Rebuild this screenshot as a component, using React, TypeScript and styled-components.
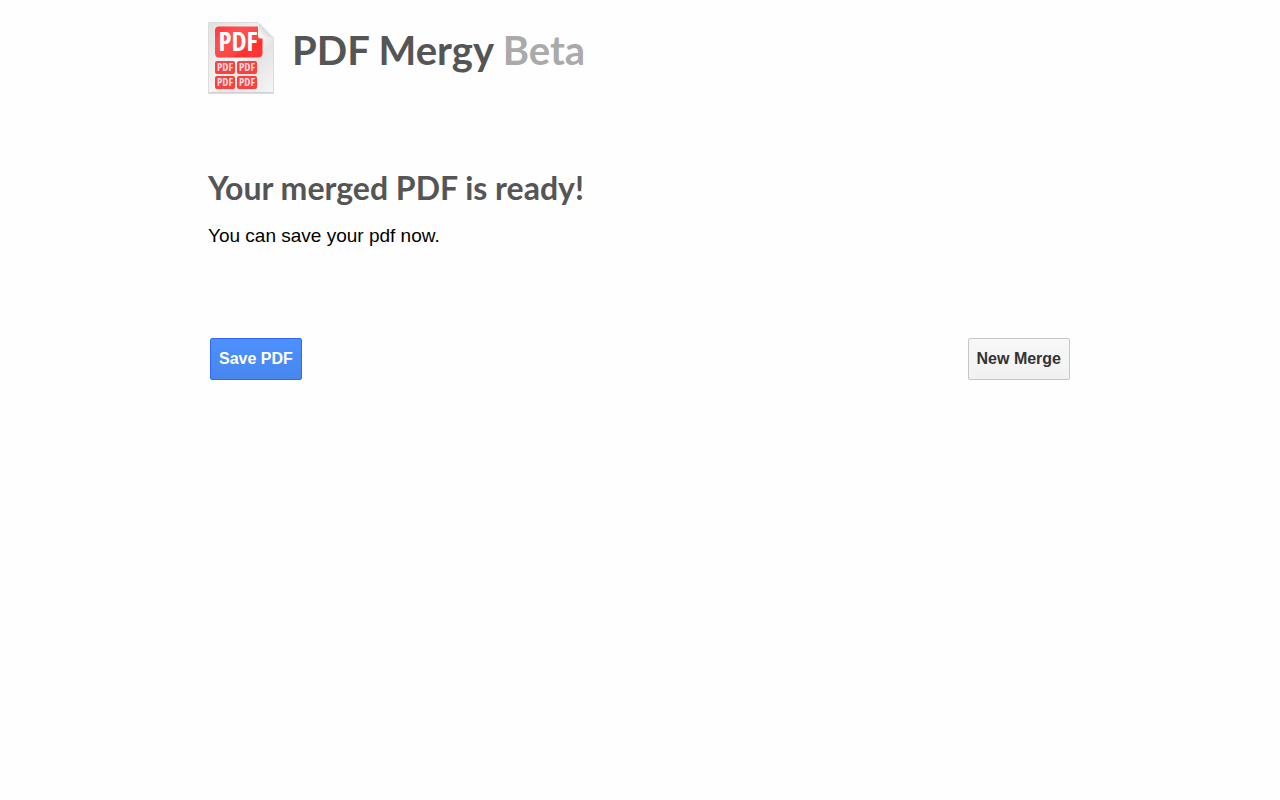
import React from "react";
import styled, { createGlobalStyle } from "styled-components";

const GlobalStyle = createGlobalStyle`
  body {
    margin: 0;
    background: #fefefe;
    color: #000;
    font-family: "Liberation Sans", Arial, sans-serif;
  }
`;

const Page = styled.div`
  box-sizing: border-box;
  max-width: 896px;
  margin: 0 auto;
  padding: 22px 16px;
`;

const Header = styled.header`
  display: flex;
  align-items: flex-start;
  gap: 18px;
  margin-bottom: 70px;
`;

const Logo = styled.svg`
  flex: none;
  width: 66px;
  height: 72px;
`;

const Title = styled.h1`
  margin: 0;
  color: #555;
  font: bold 40px/56px "Comic Sans MS", Lato, sans-serif;
`;

const Beta = styled.span`
  color: #aaa;
`;

const Heading = styled.h2`
  margin: 0 0 12px;
  color: #555;
  font: bold 32px/48px "Comic Sans MS", Lato, sans-serif;
`;

const Message = styled.p`
  margin: 0 0 88px;
  font-size: 19px;
  line-height: 24px;
`;

const Actions = styled.div`
  display: flex;
  justify-content: space-between;
  padding: 2px;
`;

const Button = styled.button<{ $primary?: boolean }>`
  height: 42px;
  padding: 0 8px;
  border: 1px solid ${(p) => (p.$primary ? "#3366ff" : "#c6c6c6")};
  border-radius: 2px;
  background: ${(p) =>
    p.$primary
      ? "linear-gradient(#4d90fe, #4787ed)"
      : "linear-gradient(#f8f8f8, #f1f1f1)"};
  color: ${(p) => (p.$primary ? "#fff" : "#333")};
  font: bold 16px/24px "Liberation Sans", Arial, sans-serif;
  cursor: pointer;
`;

const smallBadges = [
  { x: 7, y: 39 },
  { x: 29, y: 39 },
  { x: 7, y: 54 },
  { x: 29, y: 54 },
];

function PdfLogo() {
  return (
    <Logo viewBox="0 0 66 72" role="img" aria-label="PDF Mergy">
      <defs>
        <linearGradient id="paper" x1="0" y1="0" x2="1" y2="1">
          <stop offset="0" stopColor="#e0e0e0" />
          <stop offset="0.5" stopColor="#f4f4f4" />
          <stop offset="0.64" stopColor="#e4e4e4" />
          <stop offset="1" stopColor="#f6f6f6" />
        </linearGradient>
        <linearGradient id="red" x1="0" y1="0" x2="1" y2="1">
          <stop offset="0" stopColor="#ff3535" />
          <stop offset="0.3" stopColor="#ff5050" />
          <stop offset="0.65" stopColor="#fb4444" />
          <stop offset="0.7" stopColor="#ff3030" />
          <stop offset="1" stopColor="#ff3939" />
        </linearGradient>
        <linearGradient id="fold" x1="0" y1="1" x2="1" y2="0">
          <stop offset="0" stopColor="#fff" />
          <stop offset="0.5" stopColor="#dadada" />
        </linearGradient>
      </defs>
      <path d="M.5.5H50L65.5 16V71.5H.5Z" fill="url(#paper)" stroke="#dcdcdc" />
      <path d="M1 70.5H65" stroke="#d2d2d2" />
      <path
        d="M11 4.500H50V14Q50 16.500 52 16.500H54.500V31Q54.500 35.500 50 35.500H11Q7 35.500 7 31V8.500Q7 4.500 11 4.500Z"
        fill="url(#red)"
      />
      <path d="M51 1L65 15.500H53Q51 15.500 51 13Z" fill="url(#fold)" />
      <text
        x="30"
        y="29"
        textAnchor="middle"
        fill="#fff"
        fontFamily="Open Sans Condensed, sans-serif"
        fontSize="27"
        fontWeight="bold"
      >
        PDF
      </text>
      {smallBadges.map(({ x, y }) => (
        <g key={`${x}-${y}`}>
          <rect x={x} y={y} width="20" height="13" rx="2" fill="#fa4040" />
          <text
            x={x + 10}
            y={y + 10}
            textAnchor="middle"
            fill="#ffdede"
            fontFamily="Open Sans Condensed, sans-serif"
            fontSize="11"
            fontWeight="bold"
          >
            PDF
          </text>
        </g>
      ))}
    </Logo>
  );
}

export default function App() {
  return (
    <>
      <GlobalStyle />
      <Page>
        <Header>
          <PdfLogo />
          <Title>
            PDF Mergy <Beta>Beta</Beta>
          </Title>
        </Header>
        <main>
          <Heading>Your merged PDF is ready!</Heading>
          <Message>You can save your pdf now.</Message>
          <Actions>
            <Button type="button" $primary>
              Save PDF
            </Button>
            <Button type="button">New Merge</Button>
          </Actions>
        </main>
      </Page>
    </>
  );
}
